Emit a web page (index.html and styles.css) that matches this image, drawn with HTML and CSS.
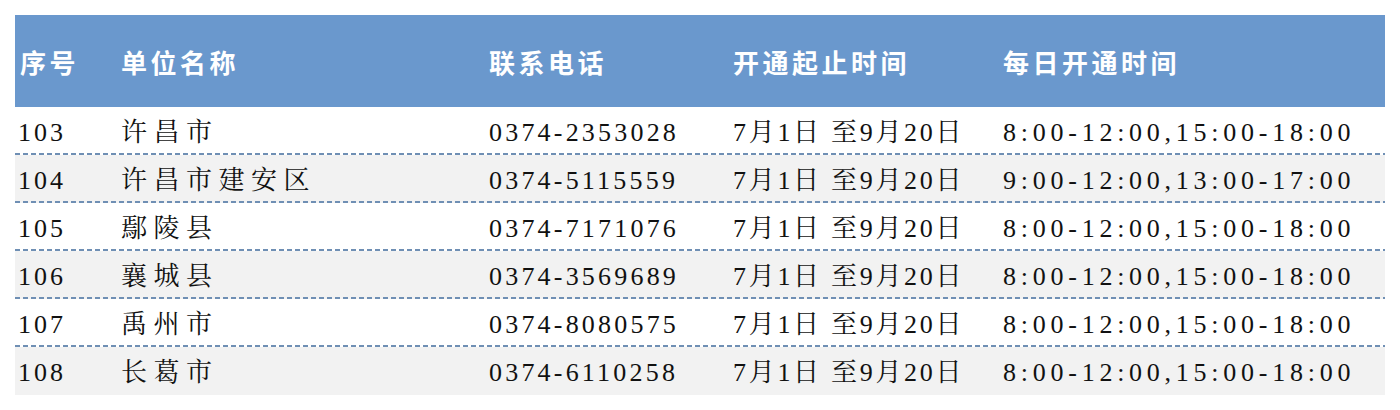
FILE: index.html
```html
<!DOCTYPE html>
<html lang="zh-CN">
<head>
<meta charset="utf-8">
<title>开通时间表</title>
<link rel="stylesheet" href="styles.css">
</head>
<body>
<div class="table">
  <div class="row head">
    <div class="cell">序号</div>
    <div class="cell">单位名称</div>
    <div class="cell">联系电话</div>
    <div class="cell">开通起止时间</div>
    <div class="cell">每日开通时间</div>
  </div>
  <div class="row body dashed">
    <div class="cell num">103</div>
    <div class="cell name">许昌市</div>
    <div class="cell phone">0374-2353028</div>
    <div class="cell date">7月1日 至9月20日</div>
    <div class="cell time">8:00-12:00,15:00-18:00</div>
  </div>
  <div class="row body dashed alt">
    <div class="cell num">104</div>
    <div class="cell name">许昌市建安区</div>
    <div class="cell phone">0374-5115559</div>
    <div class="cell date">7月1日 至9月20日</div>
    <div class="cell time">9:00-12:00,13:00-17:00</div>
  </div>
  <div class="row body dashed">
    <div class="cell num">105</div>
    <div class="cell name">鄢陵县</div>
    <div class="cell phone">0374-7171076</div>
    <div class="cell date">7月1日 至9月20日</div>
    <div class="cell time">8:00-12:00,15:00-18:00</div>
  </div>
  <div class="row body dashed alt">
    <div class="cell num">106</div>
    <div class="cell name">襄城县</div>
    <div class="cell phone">0374-3569689</div>
    <div class="cell date">7月1日 至9月20日</div>
    <div class="cell time">8:00-12:00,15:00-18:00</div>
  </div>
  <div class="row body dashed">
    <div class="cell num">107</div>
    <div class="cell name">禹州市</div>
    <div class="cell phone">0374-8080575</div>
    <div class="cell date">7月1日 至9月20日</div>
    <div class="cell time">8:00-12:00,15:00-18:00</div>
  </div>
  <div class="row body alt">
    <div class="cell num">108</div>
    <div class="cell name">长葛市</div>
    <div class="cell phone">0374-6110258</div>
    <div class="cell date">7月1日 至9月20日</div>
    <div class="cell time">8:00-12:00,15:00-18:00</div>
  </div>
</div>
</body>
</html>
```

FILE: styles.css
```css
html, body {
  margin: 0;
  padding: 0;
  background: #ffffff;
}

body {
  padding: 15px;
}

.table {
  width: 1370px;
}

.row {
  display: grid;
  grid-template-columns: 101px 368px 244px 270px 387px;
  align-items: center;
}

.cell {
  padding-left: 5px;
  white-space: nowrap;
}

.head {
  height: 92px;
  background: #6a98cd;
  color: #ffffff;
  font-family: "Noto Sans CJK SC", "Noto Sans", sans-serif;
  font-weight: 700;
  font-size: 26px;
  letter-spacing: 3.5px;
}

.body {
  height: 48px;
  background-color: #ffffff;
  color: #111111;
  font-family: "Liberation Serif", "Noto Serif CJK SC", "Noto Sans CJK SC", serif;
  font-size: 26px;
  letter-spacing: 3px;
  line-height: 1;
}

.body .cell {
  padding-top: 3px;
}

.alt {
  background-color: #f2f2f2;
}

.dashed {
  background-image: repeating-linear-gradient(to right, #6f8fb4 0 5px, transparent 5px 8px);
  background-size: 100% 2px;
  background-position: left bottom;
  background-repeat: no-repeat;
}

.num {
  padding-left: 3px;
}

.name {
  font-size: 26px;
  letter-spacing: 6.5px;
}

.phone {
  letter-spacing: 3.2px;
}

.date {
  letter-spacing: 2.7px;
}

.time {
  letter-spacing: 4.75px;
}
```
